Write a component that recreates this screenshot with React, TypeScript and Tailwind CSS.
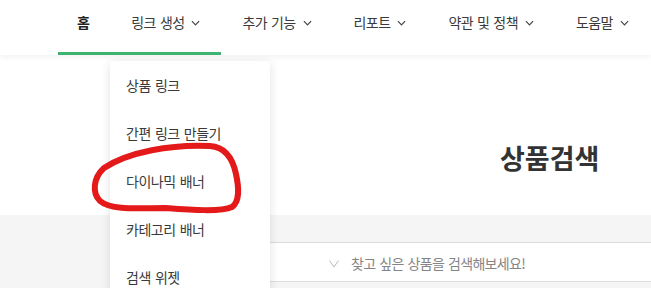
import React from 'react';

const navItems = [
  { label: '홈', bold: true, arrow: false },
  { label: '링크 생성', arrow: true },
  { label: '추가 기능', arrow: true },
  { label: '리포트', arrow: true },
  { label: '약관 및 정책', arrow: true },
  { label: '도움말', arrow: true },
];

const menuItems = ['상품 링크', '간편 링크 만들기', '다이나믹 배너', '카테고리 배너', '검색 위젯'];

const Chevron = ({ className }: { className?: string }) => (
  <svg viewBox="0 0 10 6" className={className} fill="none" stroke="currentColor" strokeWidth={1.3}>
    <path d="M1 1 L5 5 L9 1" />
  </svg>
);

export default function App() {
  return (
    <div
      className="relative w-[651px] h-[288px] overflow-hidden bg-white text-[#333]"
      style={{ fontFamily: '"Noto Sans CJK KR", "Noto Sans", sans-serif' }}
    >
      {/* Header */}
      <header className="relative z-10 h-[55px] bg-white shadow-[0_2px_6px_rgba(0,0,0,0.06)]">
        <nav className="flex pl-[56px]">
          {navItems.map((item) => (
            <div
              key={item.label}
              className="flex h-[55px] shrink-0 items-start whitespace-nowrap px-[21px] pt-[11px] text-[14px] leading-[22px] tracking-[-0.6px] [word-spacing:1.5px] text-[#3a3a3a]"
            >
              <span className={item.bold ? 'font-bold text-[#222]' : ''}>{item.label}</span>
              {item.arrow && <Chevron className="ml-[7px] mt-[9px] w-[9px] h-[6px] shrink-0 text-[#444]" />}
            </div>
          ))}
        </nav>
        <div className="absolute left-[58px] top-[52px] h-[3px] w-[163px] bg-[#3cb371]" />
      </header>

      {/* Title area */}
      <section className="h-[160px] pl-[500px] pt-[86px]">
        <h1 className="text-[27px] font-bold leading-[34px] text-[#333]">상품검색</h1>
      </section>

      {/* Search area */}
      <section className="h-[73px] bg-[#f5f5f5] pt-[27px]">
        <div className="ml-[200px] flex h-[40px] items-center border-y border-[#dcdcdc] bg-white pl-[129px] pt-[3px]">
          <svg viewBox="0 0 10 8" className="w-[10px] h-[8px] text-[#bbb]" fill="none" stroke="currentColor" strokeWidth={1}>
            <path d="M0.5 0.5 L5 7 L9.5 0.5" />
          </svg>
          <span className="ml-[12px] whitespace-nowrap text-[14px] tracking-[-0.7px] [word-spacing:1.5px] text-[#858585]">찾고 싶은 상품을 검색해보세요!</span>
        </div>
      </section>

      {/* Dropdown menu */}
      <div className="absolute left-[110px] top-[61px] z-20 w-[160px] h-[240px] rounded-[4px] bg-white shadow-[0_2px_10px_rgba(0,0,0,0.12)]">
        {menuItems.map((m) => (
          <div key={m} className="flex h-[48px] items-center whitespace-nowrap px-4 text-[14px] tracking-[-0.5px] [word-spacing:1.5px] text-[#3a3a3a]">
            {m}
          </div>
        ))}
      </div>

      {/* Red hand-drawn circle */}
      <svg className="absolute left-0 top-0 z-30 pointer-events-none" width="651" height="288" fill="none">
        <path
          d="M104 168 C128 152 172 144 210 146 C226 147 233 160 236 174 C239 188 240 201 232 207 C221 212 192 210 166 208 C140 208 112 211 100 201 C92 193 93 178 104 168"
          stroke="#e41a1a"
          strokeWidth={6}
          strokeLinecap="round"
          strokeLinejoin="round"
        />
      </svg>
    </div>
  );
}
